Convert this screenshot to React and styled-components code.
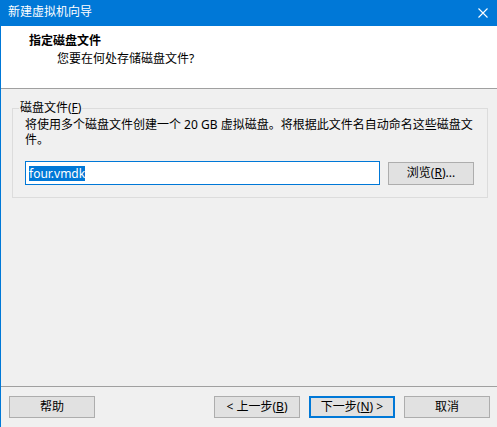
import React from "react";
import styled, { createGlobalStyle } from "styled-components";

const Global = createGlobalStyle`
  html, body { margin: 0; padding: 0; background: #f0f0f0; }
  body {
    font-family: "Noto Sans", "Noto Sans CJK SC", sans-serif;
    font-size: 12px;
    color: #000;
  }
  #root { width: 497px; height: 427px; }
`;

const Window = styled.div`
  width: 497px;
  height: 427px;
  box-sizing: border-box;
  border-left: 1px solid #0078d7;
  display: flex;
  flex-direction: column;
  background: #f0f0f0;
  overflow: hidden;
`;

const TitleBar = styled.div`
  height: 26px;
  flex: none;
  background: #0078d7;
  color: #fff;
  display: flex;
  align-items: center;
  justify-content: space-between;
  padding: 0 9px 4px 8px;
  margin-left: -1px;
  box-sizing: border-box;
  line-height: 16px;
`;

const TitleText = styled.span`
  font-size: 12px;
  padding-top: 2px;
`;

const CloseIcon = styled.svg`
  width: 10px;
  height: 10px;
  display: block;
  margin-top: 3px;
`;

const Header = styled.div`
  height: 56px;
  flex: none;
  background: #fff;
  border-bottom: 1px solid #a0a0a0;
  padding: 6px 0 0 28px;
  box-sizing: content-box;
`;

const HeaderTitle = styled.div`
  font-weight: bold;
  line-height: 18px;
`;

const HeaderSub = styled.div`
  line-height: 18px;
  padding-left: 28px;
`;

const Content = styled.div`
  flex: 1;
  padding: 11px 9px 0 11px;
`;

const Group = styled.fieldset`
  margin: 0;
  border: 1px solid #dcdcdc;
  padding: 0 6px 12px 6px;
  min-width: 0;
`;

const Legend = styled.legend`
  padding: 0 1px;
  line-height: 16px;
`;

const GroupBody = styled.div`
  padding: 0 6px;
`;

const Desc = styled.p`
  margin: 1px 0 0;
  line-height: 15px;
  width: 451px;
`;

const FileRow = styled.div`
  display: flex;
  align-items: center;
  gap: 8px;
  margin-top: 14px;
`;

const TextBox = styled.div`
  width: 355px;
  height: 24px;
  box-sizing: border-box;
  border: 1px solid #0078d7;
  background: #fff;
  display: flex;
  align-items: center;
  padding-left: 3px;
`;

const Selected = styled.span`
  background: #0078d7;
  color: #fff;
  line-height: 15px;
`;

const Button = styled.button`
  width: ${(p) => p.$w || 86}px;
  height: ${(p) => p.$h || 22}px;
  box-sizing: border-box;
  background: #e1e1e1;
  border: ${(p) => (p.$default ? "2px solid #0078d7" : "1px solid #adadad")};
  font-family: inherit;
  font-size: 12px;
  color: #000;
  padding: 0;
  line-height: 16px;
  flex: none;
`;

const Footer = styled.div`
  flex: none;
  border-top: 1px solid #a0a0a0;
  padding: 9px 7px 9px 8px;
  display: flex;
  align-items: center;
`;

const Spacer = styled.div`
  flex: 1;
`;

const NavGroup = styled.div`
  display: flex;
  gap: 9px;
`;

export default function App() {
  return (
    <>
      <Global />
      <Window>
        <TitleBar>
          <TitleText>新建虚拟机向导</TitleText>
          <CloseIcon viewBox="0 0 10 10">
            <path d="M0.5 0.5 L9.5 9.5 M9.5 0.5 L0.5 9.5" stroke="#fff" strokeWidth="1.1" fill="none" />
          </CloseIcon>
        </TitleBar>
        <Header>
          <HeaderTitle>指定磁盘文件</HeaderTitle>
          <HeaderSub>您要在何处存储磁盘文件?</HeaderSub>
        </Header>
        <Content>
          <Group>
            <Legend>
              磁盘文件(<u>F</u>)
            </Legend>
            <GroupBody>
              <Desc>将使用多个磁盘文件创建一个 20 GB 虚拟磁盘。将根据此文件名自动命名这些磁盘文件。</Desc>
              <FileRow>
                <TextBox>
                  <Selected>four.vmdk</Selected>
                </TextBox>
                <Button $w={86} $h={23}>
                  浏览(<u>R</u>)...
                </Button>
              </FileRow>
            </GroupBody>
          </Group>
        </Content>
        <Footer>
          <Button $w={86}>帮助</Button>
          <Spacer />
          <NavGroup>
            <Button>
              &lt; 上一步(<u>B</u>)
            </Button>
            <Button $default>
              下一步(<u>N</u>) &gt;
            </Button>
            <Button>取消</Button>
          </NavGroup>
        </Footer>
      </Window>
    </>
  );
}
